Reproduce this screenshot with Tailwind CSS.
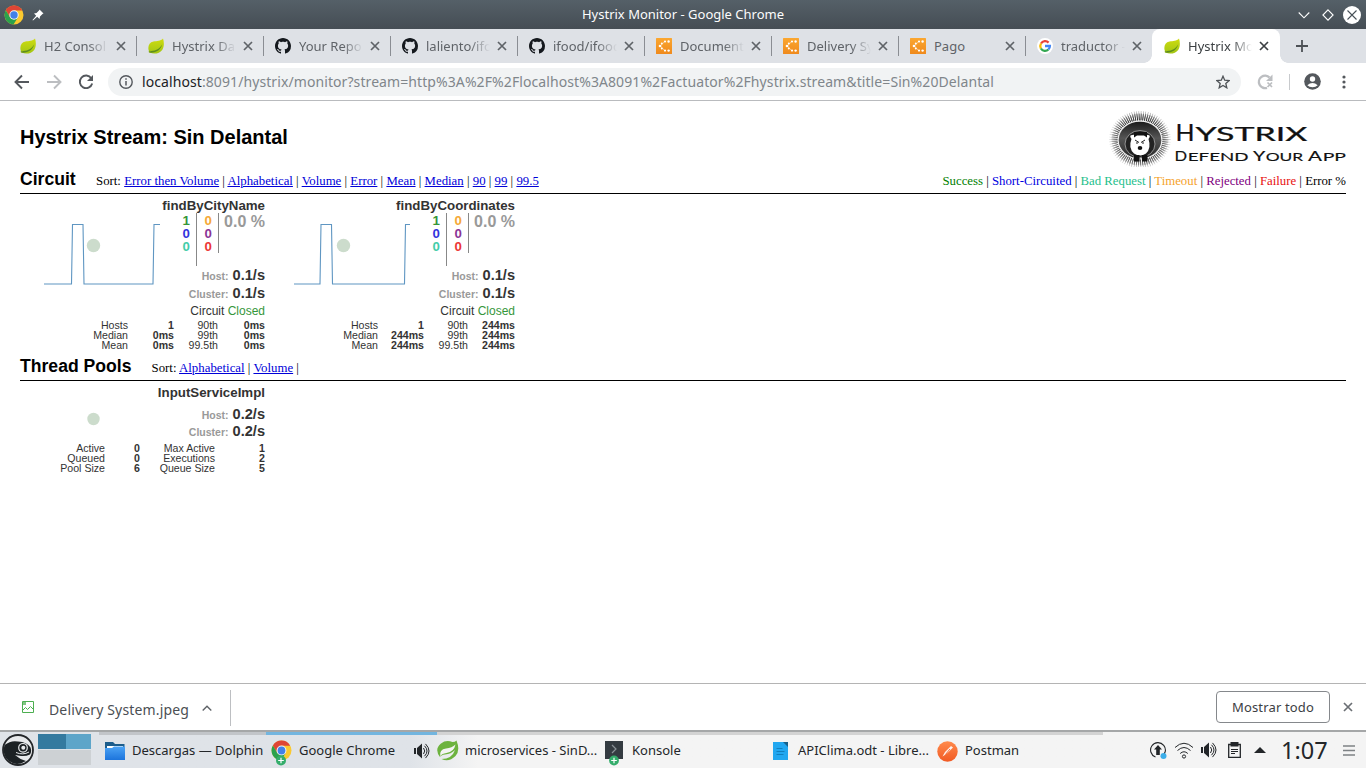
<!DOCTYPE html>
<html lang="es">
<head>
<meta charset="utf-8">
<title>Hystrix Monitor</title>
<script src="https://cdn.jsdelivr.net/npm/@tailwindcss/browser@4"></script>
</head>
<body class="w-[1366px] h-[768px] overflow-hidden bg-white flex flex-col font-['Noto_Sans',sans-serif]">

<svg class="absolute size-0">
  <defs>
    <linearGradient id="leafg" x1="0" y1="0" x2="0" y2="1"><stop offset="0" stop-color="#cfdc10"/><stop offset="1" stop-color="#a3c614"/></linearGradient>
    <linearGradient id="orangeg" x1="0" y1="0" x2="0" y2="1"><stop offset="0" stop-color="#fba730"/><stop offset="1" stop-color="#ef8a1d"/></linearGradient>
    <linearGradient id="folderg" x1="0" y1="0" x2="0" y2="1"><stop offset="0" stop-color="#4ba3f5"/><stop offset="1" stop-color="#1c74dc"/></linearGradient>
    <linearGradient id="postg" x1="0" y1="0" x2="0" y2="1"><stop offset="0" stop-color="#ff8a4c"/><stop offset="1" stop-color="#f15a24"/></linearGradient>
    <radialGradient id="spikeg" gradientUnits="userSpaceOnUse" cx="34" cy="28" r="32"><stop offset="0.6" stop-color="#222"/><stop offset="0.78" stop-color="#777"/><stop offset="1" stop-color="#fff"/></radialGradient>
    <linearGradient id="bodyg" x1="0" y1="0" x2="0" y2="1"><stop offset="0" stop-color="#1b1b1b"/><stop offset="0.45" stop-color="#555"/><stop offset="1" stop-color="#2a2a2a"/></linearGradient>
  </defs>
  <symbol id="leaf" viewBox="0 0 16 16">
    <path d="M.6 12.2C-.3 8 1.2 4.200 5.500 3.400c3.500-.6 7-.2 9.500-3 1.200 3.600 1.300 8.300-.8 11.500-2.600 3.600-8.300 4.700-12.400 2.600z" fill="url(#leafg)"/>
    <path d="M1.200 13.200c4.500.1 9.800-1 13-6.600-1.400 5-5.500 8.300-11.900 8.100z" fill="#5d8d1f"/>
    <circle cx="1.700" cy="13.700" r="1" fill="#7fa51c"/>
  </symbol>
  <symbol id="github" viewBox="0 0 16 16">
    <path fill="#15191e" fill-rule="evenodd" d="M8 0C3.580 0 0 3.580 0 8c0 3.540 2.290 6.530 5.470 7.590.4.070.55-.17.55-.38 0-.19-.01-.82-.01-1.490-2.010.37-2.530-.49-2.690-.94-.09-.23-.48-.94-.82-1.130-.28-.15-.68-.52-.01-.53.63-.01 1.080.58 1.230.82.720 1.210 1.870.87 2.330.66.070-.52.280-.87.510-1.070-1.780-.2-3.640-.89-3.640-3.950 0-.87.310-1.590.82-2.150-.08-.2-.36-1.020.08-2.120 0 0 .67-.21 2.200.82.640-.18 1.320-.27 2-.27s1.360.09 2 .27c1.530-1.040 2.200-.82 2.200-.82.440 1.100.160 1.920.08 2.120.51.560.82 1.270.82 2.150 0 3.070-1.870 3.750-3.650 3.950.290.250.540.730.540 1.480 0 1.070-.01 1.930-.01 2.200 0 .210.150.460.550.380A8.010 8.010 0 0 0 16 8c0-4.420-3.580-8-8-8z"/>
  </symbol>
  <symbol id="flow" viewBox="0 0 16 16">
    <rect width="16" height="16" rx=".5" fill="url(#orangeg)"/>
    <path d="M8.500 3.800 6.300 5.800 4.400 8l2 2.300 2 1.900" fill="none" stroke="#fff" stroke-width=".5"/>
    <g fill="#fff"><circle cx="9" cy="3.500" r="1.100"/><circle cx="12.600" cy="3.500" r="1.200"/><circle cx="5.800" cy="5.600" r="1"/><circle cx="4" cy="8" r="1.300"/><circle cx="5.800" cy="10.400" r="1"/><circle cx="9" cy="12.600" r="1.100"/><circle cx="12.600" cy="12.600" r="1.200"/></g>
  </symbol>
  <symbol id="google" viewBox="0 0 16 16">
    <circle cx="8" cy="8" r="8" fill="#fff"/>
    <g fill="none" stroke-width="2.300"><path d="M4 5.500A4.900 4.900 0 0 1 11.600 4.600" stroke="#ea4335"/><path d="M3.900 10.500A4.900 4.900 0 0 1 4 5.500" stroke="#fbbc05"/><path d="M11.400 11.500A4.900 4.900 0 0 1 3.900 10.500" stroke="#34a853"/><path d="M8 8h4.900A4.900 4.900 0 0 1 11.400 11.500" stroke="#4285f4"/></g>
  </symbol>
  <symbol id="chrome" viewBox="0 0 20 20">
    <circle cx="10" cy="10" r="9.500" fill="#fbc92f"/>
    <path d="M1.800 5.200A9.500 9.500 0 0 1 18.300 5.500H10L6 12.300z" fill="#df4535"/>
    <path d="M1.800 5.200A9.500 9.500 0 0 0 9.500 19.500L14 12.200 6.200 12.500z" fill="#2ba24c"/>
    <circle cx="10" cy="10" r="4.700" fill="#f4f4f4"/><circle cx="10" cy="10" r="3.700" fill="#4381e8"/>
  </symbol>
  <symbol id="x" viewBox="0 0 10 10"><path d="M1 1l8 8M9 1l-8 8" stroke="currentColor" stroke-width="1.700" fill="none"/></symbol>
  <symbol id="speaker" viewBox="0 0 18 16">
    <path d="M1 5h2v6H1zM4 5l5-4.500v15L4 11z" fill="#232629"/><path d="M10.500 5q2.500 3 0 6M11.500 2.800q5 5.200 0 10.400M12.500.9q7 7.100 0 14.200" fill="none" stroke="#232629" stroke-width="1"/>
  </symbol>
</svg>

<!-- Window title bar -->
<header class="h-[29px] shrink-0 bg-gradient-to-b from-[#556068] to-[#454d54] flex items-center pl-1 pr-[5px]">
  <svg class="size-5"><use href="#chrome"/></svg>
  <svg class="ml-2 size-3" viewBox="0 0 12 12"><path d="M7.500.5 11.500 4.500 10.500 5 8 7.500 7.500 10 5.200 7.800 1 11.500.5 11 4.200 6.800 2 4.500 4.500 4 7 1.500z" fill="#fff"/></svg>
  <h1 class="flex-1 text-center text-[13px] leading-[29px] text-[#fcfcfc] pl-[24px]">Hystrix Monitor - Google Chrome</h1>
  <div class="flex items-center text-white">
    <svg class="w-3 h-3" viewBox="0 0 12 12"><path d="M.7 3.500 6 8.800l5.300-5.300" fill="none" stroke="#fff" stroke-width="1.100"/></svg>
    <svg class="w-3 h-3 ml-3" viewBox="0 0 12 12"><path d="M6 .9 11.100 6 6 11.100.9 6z" fill="none" stroke="#fff" stroke-width="1.100"/></svg>
    <svg class="size-[18px] ml-[9px]" viewBox="0 0 18 18"><circle cx="9" cy="9" r="9" fill="#fff"/><path d="M4.500 4.500l9 9M13.500 4.500l-9 9" stroke="#475057" stroke-width="1.100"/></svg>
  </div>
</header>

<!-- Tab strip -->
<nav class="h-[34px] shrink-0 bg-[#dee1e6] flex items-center pl-[10px] text-[13px] text-[#5f6368]">
  <div class="w-[127px] h-5 border-r border-[#8a8d93] flex items-center pl-[10px]"><svg class="size-4"><use href="#leaf"/></svg><span class="ml-2 w-[64px] pt-[1px] overflow-hidden whitespace-nowrap [mask-image:linear-gradient(to_right,black_44px,transparent)]">H2 Consol</span><svg class="ml-2 size-[10px]"><use href="#x"/></svg></div>
  <div class="w-[127px] h-5 border-r border-[#8a8d93] flex items-center pl-[11px]"><svg class="size-4"><use href="#leaf"/></svg><span class="ml-2 w-[64px] pt-[1px] overflow-hidden whitespace-nowrap [mask-image:linear-gradient(to_right,black_44px,transparent)]">Hystrix Da</span><svg class="ml-[7px] size-[10px]"><use href="#x"/></svg></div>
  <div class="w-[127px] h-5 border-r border-[#8a8d93] flex items-center pl-[11px]"><svg class="size-4"><use href="#github"/></svg><span class="ml-2 w-[64px] pt-[1px] overflow-hidden whitespace-nowrap [mask-image:linear-gradient(to_right,black_44px,transparent)]">Your Repo</span><svg class="ml-[7px] size-[10px]"><use href="#x"/></svg></div>
  <div class="w-[127px] h-5 border-r border-[#8a8d93] flex items-center pl-[11px]"><svg class="size-4"><use href="#github"/></svg><span class="ml-2 w-[64px] pt-[1px] overflow-hidden whitespace-nowrap [mask-image:linear-gradient(to_right,black_44px,transparent)]">laliento/ifo</span><svg class="ml-[7px] size-[10px]"><use href="#x"/></svg></div>
  <div class="w-[127px] h-5 border-r border-[#8a8d93] flex items-center pl-[11px]"><svg class="size-4"><use href="#github"/></svg><span class="ml-2 w-[64px] pt-[1px] overflow-hidden whitespace-nowrap [mask-image:linear-gradient(to_right,black_44px,transparent)]">ifood/ifood</span><svg class="ml-[7px] size-[10px]"><use href="#x"/></svg></div>
  <div class="w-[127px] h-5 border-r border-[#8a8d93] flex items-center pl-[11px]"><svg class="size-4"><use href="#flow"/></svg><span class="ml-2 w-[64px] pt-[1px] overflow-hidden whitespace-nowrap [mask-image:linear-gradient(to_right,black_44px,transparent)]">Document</span><svg class="ml-[7px] size-[10px]"><use href="#x"/></svg></div>
  <div class="w-[127px] h-5 border-r border-[#8a8d93] flex items-center pl-[11px]"><svg class="size-4"><use href="#flow"/></svg><span class="ml-2 w-[64px] pt-[1px] overflow-hidden whitespace-nowrap [mask-image:linear-gradient(to_right,black_44px,transparent)]">Delivery Sy</span><svg class="ml-[7px] size-[10px]"><use href="#x"/></svg></div>
  <div class="w-[127px] h-5 border-r border-[#8a8d93] flex items-center pl-[11px]"><svg class="size-4"><use href="#flow"/></svg><span class="ml-2 w-[64px] pt-[1px] overflow-hidden whitespace-nowrap">Pago</span><svg class="ml-[7px] size-[10px]"><use href="#x"/></svg></div>
  <div class="w-[126px] h-5 flex items-center pl-[11px]"><svg class="size-4"><use href="#google"/></svg><span class="ml-2 w-[64px] pt-[1px] overflow-hidden whitespace-nowrap [mask-image:linear-gradient(to_right,black_44px,transparent)]">traductor -</span><svg class="ml-[7px] size-[10px]"><use href="#x"/></svg></div>
  <div class="relative w-[128px] h-[34px] bg-white rounded-t-lg flex items-center pl-3 text-[#3c4043]"><i class="absolute -left-2 bottom-0 size-2 bg-[radial-gradient(circle_at_0_0,#dee1e6_7.500px,white_8px)]"></i><svg class="size-4"><use href="#leaf"/></svg><span class="ml-2 w-[64px] pt-[1px] overflow-hidden whitespace-nowrap [mask-image:linear-gradient(to_right,black_44px,transparent)]">Hystrix Mo</span><svg class="ml-[7px] size-[10px]"><use href="#x"/></svg><i class="absolute -right-2 bottom-0 size-2 bg-[radial-gradient(circle_at_100%_0,#dee1e6_7.500px,white_8px)]"></i></div>
  <svg class="ml-4 size-3" viewBox="0 0 12 12"><path d="M6 0v12M0 6h12" stroke="#4d5156" stroke-width="1.800"/></svg>
</nav>

<!-- Toolbar -->
<div class="h-[38px] shrink-0 bg-white border-b border-[#b9bbbe] flex items-center pl-[14px] pr-[17px]">
  <svg class="size-4" viewBox="0 0 16 16"><path d="M15 8H2M8 1.500 1.500 8 8 14.500" fill="none" stroke="#54585d" stroke-width="1.900"/></svg>
  <svg class="ml-4 size-4" viewBox="0 0 16 16"><path d="M1 8h13M8 1.500 14.500 8 8 14.500" fill="none" stroke="#bcbec1" stroke-width="1.900"/></svg>
  <svg class="ml-4 size-4" viewBox="0 0 16 16"><path d="M13.300 4.200A6.300 6.300 0 1 0 14.200 9.500" fill="none" stroke="#54585d" stroke-width="1.900"/><path d="M15 1v6H9z" fill="#54585d"/></svg>
  <div class="ml-[14px] w-[1133px] h-[28px] rounded-full bg-[#f1f3f4] flex items-center pl-[11px] pr-[11px] whitespace-nowrap">
    <svg class="size-[14px]" viewBox="0 0 14 14"><circle cx="7" cy="7" r="6.200" fill="none" stroke="#54585d" stroke-width="1.400"/><path d="M7 6v4.500M7 3.300v1.500" stroke="#54585d" stroke-width="1.500"/></svg>
    <span class="ml-[9px] flex-1 text-[14px] tracking-[0.087px] text-[#80868b]"><span class="text-[#202124]">localhost</span>:8091/hystrix/monitor?stream=http%3A%2F%2Flocalhost%3A8091%2Factuator%2Fhystrix.stream&amp;title=Sin%20Delantal</span>
    <svg class="size-[14px]" viewBox="0 0 14 14"><path d="M7 1.200 8.700 5.200l4.400.4-3.300 2.900 1 4.300L7 10.500l-3.800 2.300 1-4.300L.9 5.600l4.400-.4z" fill="none" stroke="#4f5357" stroke-width="1.300"/></svg>
  </div>
  <svg class="ml-[16px] size-4" viewBox="0 0 16 16"><path d="M12.500 3.500A6.200 6.200 0 1 0 10 13.800" fill="none" stroke="#bcbec1" stroke-width="2.400"/><path d="M15.500.5v6.500H9z" fill="#bcbec1"/><path d="M10.500 8.500l4.500 4.500M15 8.500l-4.500 4.500" stroke="#bcbec1" stroke-width="1.700"/></svg>
  <i class="ml-4 w-px h-4 bg-[#c8cacd]"></i>
  <svg class="ml-[14px] mr-[21px] size-[17px] shrink-0" viewBox="0 0 17 17"><circle cx="8.500" cy="8.500" r="8.300" fill="#54585d"/><circle cx="8.500" cy="6" r="2.700" fill="#fff"/><path d="M3.300 12.200q2.500-2.300 5.200-2.300t5.200 2.300q-2 2-5.200 2t-5.200-2z" fill="#fff"/></svg>
  <svg class="w-[4px] h-[14px] shrink-0" viewBox="0 0 4 14"><g fill="#54585d"><circle cx="2" cy="2" r="1.600"/><circle cx="2" cy="7" r="1.600"/><circle cx="2" cy="12" r="1.600"/></g></svg>
</div>

<!-- Dashboard page -->
<main class="flex-1 px-5 font-['Liberation_Serif',serif] text-[12.8px] text-black">
  <div class="h-[66px] flex justify-between">
    <h2 class="pt-[25px] font-['Liberation_Sans',sans-serif] font-bold text-[20px] leading-[23px]">Hystrix Stream: Sin Delantal</h2>
    <svg class="mt-[10px] w-[240px] h-[56px]" viewBox="0 0 240 56">
      <ellipse cx="34" cy="28.500" rx="25" ry="22.500" fill="none" stroke="url(#spikeg)" stroke-width="7" stroke-dasharray="1 1"/>
      <ellipse cx="34" cy="28.500" rx="25" ry="22.500" fill="none" stroke="url(#spikeg)" stroke-width="12" stroke-dasharray=".5 1.500"/>
      <ellipse cx="34" cy="29" rx="22.500" ry="19.500" fill="#efefef"/>
      <ellipse cx="34" cy="29" rx="21.300" ry="18.300" fill="url(#bodyg)"/>
      <ellipse cx="34" cy="33" rx="15" ry="13.500" fill="#222" stroke="#aaa" stroke-width=".8"/>
      <path d="M25.500 28q-3-4 1-4 7-2 15 0 4 0 1 4 3 9-2.500 14.500-6 4-12 0Q22 37 25.500 28z" fill="#fff"/>
      <path d="M28 26.500V21h13v5.500l-3-2h-7z" fill="#111"/>
      <path d="M29 29l4 2.500M39 29l-4 2.500M30 32h2M36 32h2" stroke="#222" stroke-width="1"/>
      <ellipse cx="34" cy="37" rx="2.300" ry="2" fill="#111"/>
      <path d="M28 44h5.500v6.500H28zM36 44h5.500v6.500H36z" fill="#111"/>
      <g font-family="Lato, sans-serif" fill="#111">
        <g transform="translate(0 29.700) scale(1.500 1)" stroke="#111" stroke-width=".25"><text x="46.300" y="0" font-size="23" textLength="12.700" lengthAdjust="spacingAndGlyphs">H</text>
        <text x="59.700" y="0" font-size="19.500" textLength="74.500" lengthAdjust="spacingAndGlyphs">YSTRIX</text></g>
        <g transform="translate(0 49.700) scale(1.500 1)" stroke="#111" stroke-width=".15">
        <text x="45.700" y="0" font-size="13.500" textLength="8.400" lengthAdjust="spacingAndGlyphs">D</text>
        <text x="54.500" y="0" font-size="11.500" textLength="40.500" lengthAdjust="spacingAndGlyphs">EFEND</text>
        <text x="98" y="0" font-size="13.500" textLength="8.200" lengthAdjust="spacingAndGlyphs">Y</text>
        <text x="106.500" y="0" font-size="11.500" textLength="25" lengthAdjust="spacingAndGlyphs">OUR</text>
        <text x="134.600" y="0" font-size="13.500" textLength="9.300" lengthAdjust="spacingAndGlyphs">A</text>
        <text x="144.500" y="0" font-size="11.500" textLength="15.500" lengthAdjust="spacingAndGlyphs">PP</text></g>
      </g>
    </svg>
  </div>

  <section>
    <div class="h-[27px] border-b border-black flex items-baseline whitespace-nowrap leading-[24px]">
      <h3 class="w-[76px] font-['Liberation_Sans',sans-serif] font-bold text-[17.6px]">Circuit</h3>
      <p class="tracking-[0.01px]">Sort: <a class="underline text-[#0000d8]">Error then Volume</a> | <a class="underline text-[#0000d8]">Alphabetical</a> | <a class="underline text-[#0000d8]">Volume</a> | <a class="underline text-[#0000d8]">Error</a> | <a class="underline text-[#0000d8]">Mean</a> | <a class="underline text-[#0000d8]">Median</a> | <a class="underline text-[#0000d8]">90</a> | <a class="underline text-[#0000d8]">99</a> | <a class="underline text-[#0000d8]">99.5</a></p>
      <p class="ml-auto"><span class="text-[#008000]">Success</span> | <span class="text-[#0000e0]">Short-Circuited</span> | <span class="text-[#1fc08c]">Bad Request</span> | <span class="text-[#f5a32d]">Timeout</span> | <span class="text-[#800080]">Rejected</span> | <span class="text-[#e81010]">Failure</span> | Error %</p>
    </div>
    <div class="flex gap-[5px] h-[160px] font-['Liberation_Sans',sans-serif] text-[#333]">
      <article class="w-[245px] pt-1">
        <h4 class="text-right font-bold text-[13.3px] leading-[15px]">findByCityName</h4>
        <div class="flex h-[104px]">
          <svg class="w-[140px] h-[80px]" viewBox="0 0 140 80"><circle cx="73.500" cy="32.500" r="6.700" fill="#ccdccc"/><path d="M24 71H51.500L52.500 11.500H63L64 71H133L134 11.500H140" fill="none" stroke="#5f96c2" stroke-width="1.100"/></svg>
          <div class="flex-1 flex flex-col text-right font-bold">
            <div class="h-[55px] flex items-start text-[13.300px] leading-[13px]">
              <div class="w-[37px] h-[53px] pt-[1px] pr-[6px] border-r border-[#888]"><p class="text-[#35963a]">1</p><p class="text-[#3333dd]">0</p><p class="text-[#44cca8]">0</p></div>
              <div class="w-[22px] h-[40px] pt-[1px] pr-[6px] border-r border-[#888]"><p class="text-[#f5a836]">0</p><p class="text-[#8b3496]">0</p><p class="text-[#ec3535]">0</p></div>
              <p class="flex-1 text-[16px] leading-[18px] text-[#999]">0.0 %</p>
            </div>
            <p class="text-[14.600px] leading-[17px] pt-[1px]"><span class="text-[10.500px] text-[#999]">Host:</span> 0.1/s</p>
            <p class="text-[14.600px] leading-[17px]"><span class="text-[10.500px] text-[#999]">Cluster:</span> 0.1/s</p>
            <p class="text-[12px] leading-[17px] font-normal">Circuit <span class="text-[#35963a]">Closed</span></p>
          </div>
        </div>
        <div class="grid grid-cols-[108px_46px_44px_47px] text-right text-[10.600px] leading-[10px] pt-[3px]">
          <span>Hosts</span><b>1</b><span>90th</span><b>0ms</b><span>Median</span><b>0ms</b><span>99th</span><b>0ms</b><span>Mean</span><b>0ms</b><span>99.5th</span><b>0ms</b>
        </div>
      </article>
      <article class="w-[245px] pt-1">
        <h4 class="text-right font-bold text-[13.3px] leading-[15px]">findByCoordinates</h4>
        <div class="flex h-[104px]">
          <svg class="w-[140px] h-[80px]" viewBox="0 0 140 80"><circle cx="73.500" cy="32.500" r="6.700" fill="#ccdccc"/><path d="M24 71H50L51 11.500H61.500L62.500 71H134.500L135.500 11.500H140" fill="none" stroke="#5f96c2" stroke-width="1.100"/></svg>
          <div class="flex-1 flex flex-col text-right font-bold">
            <div class="h-[55px] flex items-start text-[13.300px] leading-[13px]">
              <div class="w-[37px] h-[53px] pt-[1px] pr-[6px] border-r border-[#888]"><p class="text-[#35963a]">1</p><p class="text-[#3333dd]">0</p><p class="text-[#44cca8]">0</p></div>
              <div class="w-[22px] h-[40px] pt-[1px] pr-[6px] border-r border-[#888]"><p class="text-[#f5a836]">0</p><p class="text-[#8b3496]">0</p><p class="text-[#ec3535]">0</p></div>
              <p class="flex-1 text-[16px] leading-[18px] text-[#999]">0.0 %</p>
            </div>
            <p class="text-[14.600px] leading-[17px] pt-[1px]"><span class="text-[10.500px] text-[#999]">Host:</span> 0.1/s</p>
            <p class="text-[14.600px] leading-[17px]"><span class="text-[10.500px] text-[#999]">Cluster:</span> 0.1/s</p>
            <p class="text-[12px] leading-[17px] font-normal">Circuit <span class="text-[#35963a]">Closed</span></p>
          </div>
        </div>
        <div class="grid grid-cols-[108px_46px_44px_47px] text-right text-[10.600px] leading-[10px] pt-[3px]">
          <span>Hosts</span><b>1</b><span>90th</span><b>244ms</b><span>Median</span><b>244ms</b><span>99th</span><b>244ms</b><span>Mean</span><b>244ms</b><span>99.5th</span><b>244ms</b>
        </div>
      </article>
    </div>
  </section>

  <section>
    <div class="h-[27px] border-b border-black flex items-baseline whitespace-nowrap leading-[24px]">
      <h3 class="w-[131.500px] font-['Liberation_Sans',sans-serif] font-bold text-[17.6px]">Thread Pools</h3>
      <p class="tracking-[0.02px]">Sort: <a class="underline text-[#0000d8]">Alphabetical</a> | <a class="underline text-[#0000d8]">Volume</a> |</p>
    </div>
    <article class="w-[245px] pt-1 font-['Liberation_Sans',sans-serif] text-[#333]">
      <h4 class="text-right font-bold text-[13.3px] leading-[15px]">InputServiceImpl</h4>
      <div class="flex h-[40px] pt-[6px]">
        <svg class="w-[140px] h-[34px]" viewBox="0 0 140 34"><circle cx="73.500" cy="13" r="6.200" fill="#ccdccc"/></svg>
        <div class="flex-1 text-right font-bold text-[14.600px] leading-[17px]">
          <p><span class="text-[10.500px] text-[#999]">Host:</span> 0.2/s</p>
          <p class="-mt-px"><span class="text-[10.500px] text-[#999]">Cluster:</span> 0.2/s</p>
        </div>
      </div>
      <div class="grid grid-cols-[85px_35px_75px_50px] text-right text-[10.600px] leading-[10px] pt-[3px]">
        <span>Active</span><b>0</b><span>Max Active</span><b>1</b><span>Queued</span><b>0</b><span>Executions</span><b>2</b><span>Pool Size</span><b>6</b><span>Queue Size</span><b>5</b>
      </div>
    </article>
  </section>
</main>

<!-- Downloads shelf -->
<div class="h-[47px] shrink-0 border-t border-[#b4b4b4] bg-white flex items-center pr-[13px]">
  <div class="w-[231px] h-[36px] mt-[2px] border-r border-[#bdbfc2] flex items-center pl-[22px]">
    <svg class="size-3 -mt-[2px]" viewBox="0 0 12 12"><path d="M.5.5h11v11H.5z" fill="none" stroke="#4caf50"/><path d="M.5 9.500 3.500 6.500 5.500 8.500 8.500 5.500 11.500 8.500" fill="none" stroke="#4caf50"/><path d="M1 1h3v3H1z" fill="#4caf50" opacity=".7"/></svg>
    <span class="ml-[15px] pt-[2px] text-[14px] tracking-[0.15px] text-[#4b4f54] whitespace-nowrap">Delivery System.jpeg</span>
    <svg class="ml-[13px] w-[10px] h-[6px]" viewBox="0 0 10 6"><path d="M.7 5.500 5 1.200l4.300 4.300" fill="none" stroke="#5f6368" stroke-width="1.400"/></svg>
  </div>
  <button class="ml-auto w-[114px] h-8 pt-[1px] border border-[#85888c] rounded text-[13px] tracking-[0.15px] text-[#3c4043]">Mostrar todo</button>
  <svg class="ml-[13px] size-[10px] text-[#6b6f74]"><use href="#x"/></svg>
</div>

<!-- Taskbar -->
<footer class="h-[38px] shrink-0 border-t-2 border-[#a5a7a8] bg-gradient-to-r from-[#dfe3e8] from-30% to-[#f4f4f4] to-35% flex text-[13px] text-[#232629] whitespace-nowrap">
  <svg class="mt-[2px] ml-[2px] size-8" viewBox="0 0 32 32"><circle cx="16" cy="16" r="15" fill="#e8eaec" stroke="#232629" stroke-width="1.800"/><path d="M2.500 11Q9 6 16 7.500 25 8 28.500 13.500q1.500 4-.5 7-4 2-9 1.500l-6-1q5 4.500 11 6-6 4-12.500 2.500Q2 26 1.500 16z" fill="#1c2124"/><circle cx="21" cy="13.800" r="4.300" fill="#1c2124" stroke="#e8eaec" stroke-width="1.200"/><circle cx="21.300" cy="13.800" r="2" fill="#e8eaec"/><path d="M14 18.500q7 3 13-.5" stroke="#e8eaec" fill="none"/></svg>
  <div class="mt-[2px] ml-1 w-[53px]"><div class="h-[15px] bg-gradient-to-r from-[#347a9f] from-52% to-[#5da5c9] to-52%"></div><div class="mt-px h-[15px] bg-[#cdd1d4]"></div></div>
  <div class="ml-2 w-[167px] border-t-[3px] border-[#c2c5c9] flex items-center pl-[6px] pb-[1px]"><svg class="w-5 h-[18px]" viewBox="0 0 20 18"><path d="M0 0h8l2 2h9.500v5H0z" fill="#1c5d8c"/><path d="M2 4h16v4H2z" fill="#fff"/><path d="M0 6h7l2-1.500h11V18H0z" fill="url(#folderg)"/></svg><span class="ml-[7px]">Descargas — Dolphin</span></div>
  <div class="w-[171px] border-t-[3px] border-[#72b5df] flex items-center pl-[5px] pb-[1px]"><svg class="w-[22px] h-[26px] mt-[3px]" viewBox="0 0 22 26"><use href="#chrome" x="0" y="0" width="21" height="21"/><circle cx="10" cy="20.500" r="5" fill="#34ad6b"/><path d="M10 17.700v5.600M7.200 20.500h5.600" stroke="#fff" stroke-width="1.200"/></svg><span class="ml-[6px]">Google Chrome</span><svg class="ml-[18px] w-[18px] h-4"><use href="#speaker"/></svg></div>
  <div class="w-[165px] border-t-[3px] border-[#d3d3d3] flex items-center pb-[1px]"><svg class="size-[22px]" viewBox="0 0 22 22"><path d="M19.500.5q4 10-1 15.500Q12 22.500 4.500 19 15 19 18 10 14 14 8 14.500q-4 .5-5 2.500-6-8 1-13.500Q9-.5 15.500 2q2.500 0 4-1.500z" fill="#6db33f"/><path d="M3.300 16.300Q2 9.500 9 8.500q6-.5 9.500-4Q17 12 9.500 13 5 13.500 3.300 16.300z" fill="#f4f4f4"/></svg><span class="ml-[6px]">microservices - SinD...</span></div>
  <div class="w-[168px] border-t-[3px] border-[#d3d3d3] flex items-center pl-[3px] pb-[1px]"><svg class="w-[18px] h-[25px] mt-[4px]" viewBox="0 0 18 25"><rect width="18" height="18" fill="#343b41"/><path d="M7 4l4 4-4 4" fill="none" stroke="#8b9297" stroke-width="1.200"/><circle cx="9" cy="19.500" r="4.900" fill="#34ad6b"/><path d="M9 16.700v5.600M6.200 19.500h5.600" stroke="#fff" stroke-width="1.200"/></svg><span class="ml-[9px]">Konsole</span></div>
  <div class="w-[165px] border-t-[3px] border-[#d3d3d3] flex items-center pl-[3px] pb-[1px]"><svg class="w-[15px] h-[18px]" viewBox="0 0 15 18"><path d="M0 0h11l4 4v14H0z" fill="#22a7f0"/><path d="M10 0h5v5z" fill="#16618c"/><path d="M3.500 6.500h6M3.500 9.500h8M3.500 12.500h7" stroke="#127fbd"/></svg><span class="ml-[10px]">APIClima.odt - Libre...</span></div>
  <div class="w-[168px] border-t-[3px] border-[#d3d3d3] flex items-center pl-[2px] pb-[1px]"><svg class="size-[21px]" viewBox="0 0 21 21"><circle cx="10.500" cy="10.500" r="10.200" fill="url(#postg)"/><path d="M5.500 15.500 8 11 14 5l2 1.500-6 6z" fill="#fff" opacity=".9"/><path d="M8.500 13.500 13 8" stroke="#f15a24" stroke-width=".9"/></svg><span class="ml-[7px]">Postman</span></div>
  <div class="ml-auto flex items-center pr-[11px]">
    <svg class="size-[17px]" viewBox="0 0 17 17"><path d="M5.500 15A7.400 7.400 0 1 1 11 14.800" fill="none" stroke="#232629" stroke-width="1.100"/><path d="M8 3 12 7.500H9.800V13H6.200V7.500H4z" fill="#232629"/><circle cx="13.500" cy="14" r="3" fill="#3daee9"/></svg>
    <svg class="ml-[7px] w-[20px] h-[17px]" viewBox="0 0 20 17"><g fill="none" stroke="#232629"><path d="M1 5.500q9-8.500 18 0M3.500 8.500q6.500-6 13 0M6.200 11.500q3.800-3.500 7.600 0"/><circle cx="10" cy="14.500" r="1.600"/></g></svg>
    <svg class="ml-[6px] w-[18px] h-4"><use href="#speaker"/></svg>
    <svg class="ml-[10px] w-[13px] h-4" viewBox="0 0 13 16"><path d="M.7 2.500h11.600v12.800H.7z" fill="none" stroke="#232629" stroke-width="1.300"/><path d="M2.500 0h8v4.500h-8z" fill="#232629"/><path d="M3 7.500h7M3 9.500h7M3 11.500h4" stroke="#232629"/></svg>
    <svg class="ml-[13px] w-3 h-[6px]" viewBox="0 0 12 6"><path d="M6 0l6 6H0z" fill="#232629"/></svg>
    <span class="ml-[15px] text-[23.500px] leading-[36px] w-[50px]">1:07</span>
    <svg class="ml-[12px] w-3 h-[11px]" viewBox="0 0 12 11"><path d="M0 1h12M0 5.500h12M0 10h12" stroke="#7d8184" stroke-width="1.600"/></svg>
  </div>
</footer>
</body>
</html>
